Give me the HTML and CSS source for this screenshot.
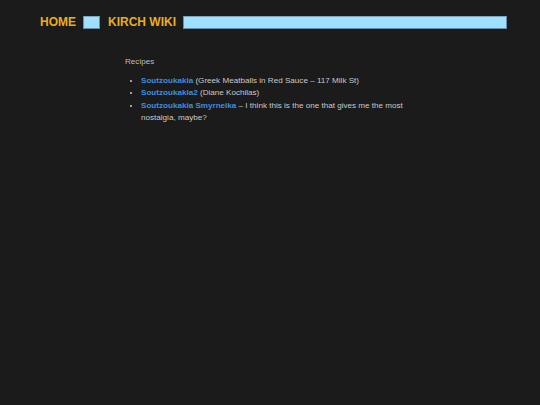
FILE: index.html
```html
<!DOCTYPE html>
<html>
<head>
<meta charset="utf-8">
<link rel="stylesheet" href="styles.css">
</head>
<body>
<header class="top">
  <a class="nav" href="#">HOME</a>
  <span class="box small"></span>
  <a class="nav" href="#">KIRCH WIKI</a>
  <span class="box wide"></span>
</header>
<main class="content">
  <p class="title">Recipes</p>
  <ul class="list">
    <li><a href="#">Soutzoukakia</a> (Greek Meatballs in Red Sauce – 117 Milk St)</li>
    <li><a href="#">Soutzoukakia2</a> (Diane Kochilas)</li>
    <li><a href="#">Soutzoukakia Smyrneika</a> – I think this is the one that gives me the most nostalgia, maybe?</li>
  </ul>
</main>
</body>
</html>
```
FILE: styles.css
```css
html, body {
  margin: 0;
  padding: 0;
  background: #1b1b1b;
  font-family: "Liberation Sans", Arial, sans-serif;
}
.top {
  display: flex;
  align-items: center;
  padding: 16px 33px 0 40px;
  height: 13px;
}
.nav {
  color: #e9ae1c;
  font-weight: bold;
  font-size: 12px;
  text-decoration: none;
  line-height: 13px;
}
.box {
  display: block;
  height: 13px;
  box-sizing: border-box;
  background: #a0e0ff;
  border: 1px solid #6a8ea8;
  border-top-color: #7fa6bf;
}
.box.small {
  width: 17px;
  margin: 0 8px 0 7px;
}
.box.wide {
  flex: 1;
  margin-left: 7px;
}
.content {
  width: 290px;
  margin: 0 auto;
  padding-top: 27px;
  font-size: 8.1px;
  line-height: 12.7px;
  color: #c8c8c8;
}
.title {
  margin: 0 0 6px 0;
  color: #bdbdbd;
}
.list {
  margin: 0;
  padding-left: 16px;
}
.list li {
  padding-left: 0;
}
.list li:last-child {
  line-height: 12.2px;
}
.list a {
  color: #3b8de0;
  font-weight: bold;
  text-decoration: none;
}
```
